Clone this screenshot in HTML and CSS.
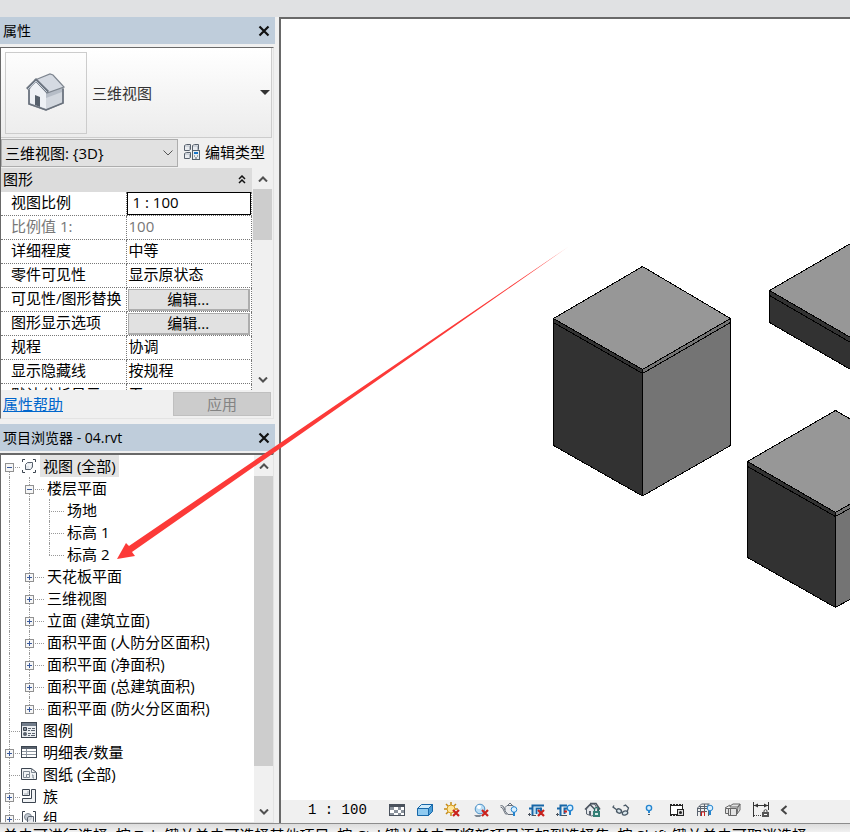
FILE: index.html
```html
<!DOCTYPE html>
<html lang="zh-CN">
<head>
<meta charset="utf-8">
<title>04.rvt</title>
<link rel="stylesheet" href="styles.css">
</head>
<body>
<div class="app">
  <div class="ribbon-edge"></div>
  <div class="workspace">
    <aside class="dock">
      <section class="palette">
        <header class="title-bar">
          <h2>属性</h2>
          <button class="close" aria-label="关闭属性"><svg width="12" height="12" viewBox="0 0 12 12"><path d="M1.500 1.500l9 9M10.500 1.500l-9 9" stroke="#111" stroke-width="2.200" fill="none"/></svg></button>
        </header>
        <div class="panel">
          <button class="type-selector">
            <span class="thumb">
              <svg width="40" height="40" viewBox="0 0 40 40">
                <path d="M3 16v15l17 6 17-7V15L22 10z" fill="#c3c9d1" stroke="#8b929b" stroke-width="1.500"/>
                <path d="M4 16l6-8 11 11v17L4 30z" fill="#eef1f5"/>
                <path d="M20 19l16-4v15l-16 6z" fill="#b6bdc7"/>
                <path d="M20 25l16-6v11l-16 6z" fill="#d3d8df"/>
                <path d="M9 7L24 1l3 1 11 12-17 6z" fill="#d5dae2" stroke="#7d858f" stroke-width="1.200"/>
                <path d="M1 16l9-9 12 12" fill="none" stroke="#6c7580" stroke-width="3"/>
                <path d="M2 16l8-8 11 11" fill="none" stroke="#c2cad5" stroke-width="1"/>
                <path d="M9 22l5 2v10l-5-2z" fill="#555f6b"/>
                <path d="M3 17v14l17 6 17-7V16" fill="none" stroke="#6a727d" stroke-width="1.500"/>
              </svg>
            </span>
            <span class="type-name">三维视图</span>
            <svg class="drop" width="10" height="5" viewBox="0 0 10 5"><path d="M0 0h10L5 5z" fill="#333"/></svg>
          </button>
          <div class="instance-row">
            <div class="select-wrap">
              <select aria-label="视图"><option>三维视图: {3D}</option></select>
              <svg width="10" height="6" viewBox="0 0 10 6"><path d="M.5.5L5 5 9.500.5" fill="none" stroke="#555"/></svg>
            </div>
            <button class="edit-type">
              <svg width="17" height="17" viewBox="0 0 17 17" fill="#e9ecf0" stroke="#57606c">
                <path d="M1.500 2.500l2-1h4v5l-1 1h-5zM9.500 2.500l2-1h4v5l-1 1h-5zM1.500 10.500l2-1h4v5l-1 1h-5z"/>
                <path d="M2 3h4.500V7M10 3h4.500V7M2 11h4.500v4" fill="none" stroke="#b5bcc5"/>
                <rect x="9.500" y="7.500" width="7" height="9"/><path d="M11 9h4v2h-4z" fill="#1874c7" stroke="none"/><path d="M11 13h1M14 13h1M12 15h2"/>
              </svg>
              <span>编辑类型</span>
            </button>
          </div>
          <div class="property-area">
            <table class="properties">
              <thead><tr><th colspan="2" scope="colgroup"><span class="group">图形 <svg width="8" height="9" viewBox="0 0 8 9"><path d="M1 4l3-3 3 3M1 8l3-3 3 3" fill="none" stroke="#111" stroke-width="1.500"/></svg></span></th></tr></thead>
              <tbody>
                <tr><th scope="row"><label for="scale">视图比例</label></th><td><input id="scale" value="1 : 100"></td></tr>
                <tr class="muted"><th scope="row">比例值 1:</th><td>100</td></tr>
                <tr><th scope="row">详细程度</th><td>中等</td></tr>
                <tr><th scope="row">零件可见性</th><td>显示原状态</td></tr>
                <tr><th scope="row">可见性/图形替换</th><td><button class="cell-button">编辑...</button></td></tr>
                <tr><th scope="row">图形显示选项</th><td><button class="cell-button">编辑...</button></td></tr>
                <tr><th scope="row">规程</th><td>协调</td></tr>
                <tr><th scope="row">显示隐藏线</th><td>按规程</td></tr>
                <tr><th scope="row">默认分析显示</th><td>无</td></tr>
              </tbody>
            </table>
            <div class="scrollbar short">
              <button aria-label="向上"><svg width="10" height="6" viewBox="0 0 10 6"><path d="M1 5.500l4-4 4 4" fill="none" stroke="#505050" stroke-width="2"/></svg></button>
              <span class="grip"></span>
              <button aria-label="向下"><svg width="10" height="6" viewBox="0 0 10 6"><path d="M1 .5l4 4 4-4" fill="none" stroke="#505050" stroke-width="2"/></svg></button>
            </div>
          </div>
          <footer class="panel-foot">
            <a href="#help">属性帮助</a>
            <button disabled>应用</button>
          </footer>
        </div>
      </section>

      <section class="palette browser">
        <header class="title-bar">
          <h2>项目浏览器 - 04.rvt</h2>
          <button class="close" aria-label="关闭项目浏览器"><svg width="12" height="12" viewBox="0 0 12 12"><path d="M1.500 1.500l9 9M10.500 1.500l-9 9" stroke="#111" stroke-width="2.200" fill="none"/></svg></button>
        </header>
        <div class="panel tree-panel">
          <ul class="tree">
            <li class="row root selected"><i class="cell node first"><b class="toggle minus"></b></i><svg width="16" height="16" viewBox="0 0 16 16" fill="none" stroke="#3c4550"><path d="M1.500 4V1.500H4M12 1.500h2.500V4M1.500 12v2.500H4M12 14.500h2.500V12"/><path d="M4.500 6.500l2-2h5v4.500l-2 2.500h-5z" fill="#e3e7ec" stroke="#59626e"/><path d="M5 7h4v4M9 7l2-2" stroke="#fff"/></svg><span>视图 (全部)</span></li>
            <li class="row"><i class="cell"></i><i class="cell node"><b class="toggle minus"></b></i><span>楼层平面</span></li>
            <li class="row"><i class="cell"></i><i class="cell"></i><i class="cell node leaf"></i><span>场地</span></li>
            <li class="row"><i class="cell"></i><i class="cell"></i><i class="cell node leaf"></i><span>标高 1</span></li>
            <li class="row"><i class="cell"></i><i class="cell"></i><i class="cell node leaf last"></i><span>标高 2</span></li>
            <li class="row"><i class="cell"></i><i class="cell node"><b class="toggle"></b></i><span>天花板平面</span></li>
            <li class="row"><i class="cell"></i><i class="cell node"><b class="toggle"></b></i><span>三维视图</span></li>
            <li class="row"><i class="cell"></i><i class="cell node"><b class="toggle"></b></i><span>立面 (建筑立面)</span></li>
            <li class="row"><i class="cell"></i><i class="cell node"><b class="toggle"></b></i><span>面积平面 (人防分区面积)</span></li>
            <li class="row"><i class="cell"></i><i class="cell node"><b class="toggle"></b></i><span>面积平面 (净面积)</span></li>
            <li class="row"><i class="cell"></i><i class="cell node"><b class="toggle"></b></i><span>面积平面 (总建筑面积)</span></li>
            <li class="row"><i class="cell"></i><i class="cell node last"><b class="toggle"></b></i><span>面积平面 (防火分区面积)</span></li>
            <li class="row root"><i class="cell node"></i><svg width="16" height="16" viewBox="0 0 16 16"><rect x=".5" y=".5" width="15" height="15" fill="#eceff2" stroke="#3c4550"/><path d="M1 1h14v3H1z" fill="#727d8b"/><path d="M2.500 5.500h3v3h-3z" fill="#8a94a0" stroke="#3c4550"/><circle cx="4" cy="12" r="2" fill="#59626e"/><path d="M7 6.500h3M11 6.500h3M7 8.500h2M10 8.500h4M7 11.500h3M11 11.500h3M7 13.500h2M10 13.500h4" stroke="#59626e"/></svg><span>图例</span></li>
            <li class="row root"><i class="cell node"><b class="toggle"></b></i><svg width="16" height="16" viewBox="0 0 16 16"><rect x=".5" y="2.500" width="15" height="11" fill="#fff" stroke="#3c4550"/><path d="M1 3h14v2H1z" fill="#59626e"/><path d="M1 7.500h14M1 10.500h14M5.500 5v8" stroke="#8d96a0"/></svg><span>明细表/数量</span></li>
            <li class="row root"><i class="cell node"></i><svg width="16" height="16" viewBox="0 0 16 16"><path d="M.5 2.500h10l5 4v7H.5z" fill="#f1f3f5" stroke="#3c4550"/><path d="M10.500 2.500v4h5M2.500 5.500h6v3h-3v3h-3zM8.500 8.500v3h-3M11 9h1v3h1" fill="none" stroke="#7d8792"/></svg><span>图纸 (全部)</span></li>
            <li class="row root"><i class="cell node"><b class="toggle"></b></i><svg width="16" height="16" viewBox="0 0 16 16" fill="#f1f3f5" stroke="#3c4550"><path d="M1.500 1.500h7v6h-7z"/><path d="M3 6h4V3" stroke="#a5adb7" fill="none"/><path d="M10.500 1.500h4v13h-13v-4h9z"/></svg><span>族</span></li>
            <li class="row root"><i class="cell node"><b class="toggle"></b></i><svg width="16" height="16" viewBox="0 0 16 16" fill="none" stroke="#3c4550"><path d="M4 1.500H1.500v13H4M12 1.500h2.500v13H12"/><circle cx="7" cy="7" r="3.500" fill="#c4cbd3" stroke="#7d8792"/><path d="M7.500 6.500h5v5l-2 2h-4V8z" fill="#dfe3e8" fill-opacity=".7" stroke="#59626e"/></svg><span>组</span></li>
          </ul>
          <div class="scrollbar long">
            <button aria-label="向上"><svg width="10" height="6" viewBox="0 0 10 6"><path d="M1 5.500l4-4 4 4" fill="none" stroke="#505050" stroke-width="2"/></svg></button>
            <span class="grip"></span>
            <button aria-label="向下"><svg width="10" height="6" viewBox="0 0 10 6"><path d="M1 .5l4 4 4-4" fill="none" stroke="#505050" stroke-width="2"/></svg></button>
          </div>
        </div>
      </section>
    </aside>

    <main class="view">
      <svg class="model" width="100%" height="100%" stroke="#000" stroke-linejoin="round" shape-rendering="crispEdges">
        <g transform="translate(-281 -19)">
          <g>
            <path d="M553.500 318.500L642.500 369.500V496L553.500 445.500z" fill="#323232"/>
            <path d="M730.500 318.500L642.500 369.500V496L730.500 445.500z" fill="#747474"/>
            <path d="M642.500 266.500L730.500 318.500 642.500 369.500 553.500 318.500z" fill="#979797"/>
            <path d="M553.500 322.500L642.500 373.500 730.500 322.500" fill="none"/>
          </g>
          <g>
            <path d="M769.500 290.500L945.500 392.500V424.500L769.500 322.500z" fill="#323232"/>
            <path d="M769.500 290.500L945.500 188.500 1121.500 290.500 945.500 392.500z" fill="#979797"/>
            <path d="M769.500 295.500L945.500 397.500" fill="none"/>
          </g>
          <g>
            <path d="M747.500 461.500L835.500 512.500V607.500L747.500 557.500z" fill="#323232"/>
            <path d="M923.500 461.500L835.500 512.500V607.500L923.500 557.500z" fill="#747474"/>
            <path d="M835.500 410.500L923.500 461.500 835.500 512.500 747.500 461.500z" fill="#979797"/>
            <path d="M747.500 466.500L835.500 516.500 923.500 466.500" fill="none"/>
          </g>
        </g>
      </svg>
      <nav class="view-bar" aria-label="视图控制栏">
        <button class="scale-button">1 : 100</button>
        <div class="tools">
          <button aria-label="详细程度"><svg width="18" height="16" viewBox="0 0 18 16"><rect x="1.500" y="2.500" width="15" height="11" fill="#fff" stroke="#4a525d"/><path d="M2 3h14v2H2z" fill="#4a525d"/><path d="M2 5h4v3H2zM10 5h3v3h-3zM6 8h4v3H6zM13 8h3v3h-3zM2 11h4v2H2zM10 11h3v2h-3z" fill="#8a929c"/></svg></button>
          <button aria-label="视觉样式"><svg width="18" height="16" viewBox="0 0 18 16" stroke="#1767a8" stroke-linejoin="round"><path d="M1.500 6.500l4-4h11l-4 4z" fill="#cfeafb"/><path d="M1.500 6.500h11v7h-11z" fill="#8fcaf0"/><path d="M12.500 6.500l4-4v7l-4 4z" fill="#4b9ed8"/></svg></button>
          <button aria-label="日光路径"><svg width="18" height="16" viewBox="0 0 18 16"><path d="M7 0v3M7 11v3M0 7h3M2 2l2 2M12 2l-2 2M2 12l2-2M11 7h3" stroke="#c28a17" stroke-width="1.500"/><circle cx="7" cy="7" r="4" fill="#ffe69a" stroke="#d59b20"/><path d="M9 8l6 6M15 8l-6 6" stroke="#c9211c" stroke-width="2.200"/></svg></button>
          <button aria-label="阴影"><svg width="18" height="16" viewBox="0 0 18 16"><path d="M2 13h8l-2 2H4z" fill="#7d8792"/><circle cx="8" cy="7" r="4.800" fill="#b9ddf5" stroke="#4f91c5"/><circle cx="7" cy="5" r="2" fill="#fff"/><path d="M10 8l6 6M16 8l-6 6" stroke="#c9211c" stroke-width="2.200"/></svg></button>
          <button aria-label="渲染"><svg width="18" height="16" viewBox="0 0 18 16" fill="#e9ebee" stroke="#68717c"><path d="M5 5.500l2-2h6l2 3-1 6H8L5 9z"/><path d="M8 3l2-2 2 2M5 8L3 4 .5 3.500M.5 5l2 1 3 6h2" fill="none"/><circle cx="14" cy="7.500" r="2.800" fill="#d8efff" stroke="#2585cf"/><path d="M14 10v4" stroke="#2585cf" stroke-width="2"/></svg></button>
          <button aria-label="裁剪视图"><svg width="18" height="16" viewBox="0 0 18 16"><path d="M4.500 14V3.500H16M1 6.500h3M8 6.500h5V13" fill="none" stroke="#1767a8" stroke-width="2"/><path d="M6 5h6v7H6z" fill="#b9ddf5"/><path d="M8.500 12V6.500H13" fill="none" stroke="#1767a8" stroke-width="1.500"/><path d="M0 12.500h3M4 13.500h4M1.500 11v3" stroke="#4a525d"/><path d="M10 8l6 6M16 8l-6 6" stroke="#c9211c" stroke-width="2.200"/></svg></button>
          <button aria-label="显示裁剪区域"><svg width="18" height="16" viewBox="0 0 18 16"><path d="M4.500 14V3.500H11M1 6.500h3M8.500 12V6.500H11" fill="none" stroke="#1767a8" stroke-width="2"/><path d="M0 12.500h3M5 13.500h6M1.500 11v3" stroke="#4a525d"/><path d="M8 9.500h3" stroke="#c9211c" stroke-width="2"/><circle cx="14" cy="6" r="2.800" fill="#d8efff" stroke="#2585cf" stroke-width="1.300"/><path d="M14 9v4" stroke="#2585cf" stroke-width="2"/></svg></button>
          <button aria-label="锁定三维视图"><svg width="18" height="16" viewBox="0 0 18 16"><path d="M2.500 7v5l5 2 6-2V7l-3-5H7z" fill="#e4e7eb" stroke="#59626e"/><path d="M5 9h2v4H5z" fill="#59626e"/><path d="M1 7.500l5-5 5 5M6 1.500h6l4 6" fill="none" stroke="#4a525d" stroke-width="1.500"/><path d="M10.500 9V7.500a2 2 0 014 0V9" fill="none" stroke="#236b63" stroke-width="1.200"/><path d="M9 9h7v6H9z" fill="#347f76"/><path d="M11 11h3v2h-3z" fill="#d6ebe8"/></svg></button>
          <button aria-label="临时隐藏隔离"><svg width="18" height="16" viewBox="0 0 18 16" fill="#d9e6ec" stroke="#4a5966" stroke-width="1.300"><ellipse cx="7" cy="9" rx="2.500" ry="2" transform="rotate(25 7 9)"/><ellipse cx="13" cy="11" rx="2.800" ry="2" transform="rotate(-20 13 11)"/><path d="M5 8L1 5l1-1.500M15 10l1.500-4-3-3-2 1M9 10l2 1" fill="none"/></svg></button>
          <button aria-label="显示隐藏的图元"><svg width="18" height="16" viewBox="0 0 18 16"><circle cx="9" cy="6" r="2.600" fill="#d8efff" stroke="#2585cf" stroke-width="1.400"/><path d="M9 9v2" stroke="#2585cf" stroke-width="2"/><path d="M8 12.500h2" stroke="#4a525d"/></svg></button>
          <button aria-label="临时视图属性"><svg width="18" height="16" viewBox="0 0 18 16"><path d="M2.500 3.500h12v9h-12z" fill="#fff" stroke="#222"/><path d="M2 3h13" stroke="#222" stroke-width="2" stroke-dasharray="2 1"/><path d="M2 13h13" stroke="#222" stroke-width="2" stroke-dasharray="2 1"/><rect x="9.500" y="7.500" width="6" height="6" fill="#ddd" stroke="#222"/><circle cx="12.500" cy="10.500" r="1.500" fill="#222"/></svg></button>
          <button aria-label="分析模型"><svg width="18" height="16" viewBox="0 0 18 16" fill="none" stroke="#59626e"><path d="M1.500 14V6l4-4h8M1.500 6.500h11V14M4.500 14V4M8.500 14V2M1 9.500h10M12 2v4M3 4.500h9"/><path d="M5.500 14v-4h3v4" stroke="#c9211c"/><circle cx="14" cy="6" r="2.800" fill="#d8efff" stroke="#2585cf"/><path d="M14 9v4" stroke="#2585cf" stroke-width="2"/></svg></button>
          <button aria-label="位移集"><svg width="18" height="16" viewBox="0 0 18 16" fill="#e2e2e2" stroke="#666"><path d="M6 4l3-2h7l-2 3H6zM14 5l2-3v6l-3 4z"/><path d="M4.500 6.500h8v7h-8zM1.500 6.500h3v5h-3zM6.500 6v8M1 6l5-3"/></svg></button>
          <button aria-label="约束"><svg width="18" height="16" viewBox="0 0 18 16"><path d="M1.500 0v15M16.500 0v8M2 3.500h14" stroke="#333"/><path d="M2 3.500l4-2v4zM16 3.500l-4-2v4z" fill="#333"/><path d="M2 13.500h8" stroke="#444" stroke-dasharray="1 1"/><path d="M12 10V8.500a2 2 0 013 0V10" fill="none" stroke="#444"/><path d="M10 10h7v5h-7z" fill="#555"/><path d="M12 12h3v1h-3z" fill="#fff"/></svg></button>
        </div>
        <button class="collapse" aria-label="收起"><svg width="8" height="10" viewBox="0 0 8 10"><path d="M6.500 1L2 5l4.500 4" fill="none" stroke="#444" stroke-width="2"/></svg></button>
      </nav>
    </main>
  </div>
  <footer class="status">单击可进行选择; 按 Tab 键并单击可选择其他项目; 按 Ctrl 键并单击可将新项目添加到选择集; 按 Shift 键并单击可取消选择。</footer>
  <svg class="callout" width="100%" height="100%" aria-hidden="true">
    <path d="M117 559L126 543 129 546 568 247 132 552 135 556z" fill="#fc3a38"/>
  </svg>
</div>
</body>
</html>
```
FILE: styles.css
```css
* { box-sizing: border-box; }
body {
  margin: 0;
  background: #f0f0f0;
  color: #000;
  font: 15px/22px "Open Sans", "Noto Sans CJK SC", sans-serif;
}
button, input, select { font: inherit; color: inherit; margin: 0; padding: 0; border: 0; background: none; border-radius: 0; }
svg { display: block; flex: none; }

.app { position: relative; height: 100vh; display: flex; flex-direction: column; overflow: hidden; }
.ribbon-edge { height: 17px; flex: none; background: #e0e1e3; }
.workspace { flex: 1; min-height: 0; display: flex; gap: 4px; }

.dock { width: 275px; flex: none; display: flex; flex-direction: column; gap: 5px; }
.title-bar { height: 27px; flex: none; display: flex; align-items: center; justify-content: space-between; padding: 0 5px 0 3px; background: #bfcddb; }
.title-bar h2 { margin: 0; font-size: 14px; font-weight: 400; }
.panel { margin: 3px 1px 0 0; border: 1px solid; border-color: #696969 #e3e3e3 #e3e3e3 #696969; padding-right: 1px; }

.type-selector { width: 100%; height: 90px; display: flex; align-items: center; gap: 5px; padding: 0 1px 0 4px; background: linear-gradient(#fff, #ececec); border: solid #ccc; border-width: 0 1px 1px 0; color: #333; text-align: left; }
.thumb { width: 82px; height: 82px; display: grid; place-items: center; border: 1px solid #ccc; background: linear-gradient(#fdfdfd, #ededed); }
.type-name { flex: 1; }

.instance-row { display: flex; align-items: flex-start; gap: 5px; padding: 1px 0; }
.select-wrap { position: relative; width: 177px; }
.select-wrap select { display: block; width: 100%; height: 28px; padding-left: 3px; appearance: none; background: #e1e1e1; border: 1px solid #adadad; }
.select-wrap svg { position: absolute; right: 5px; top: 11px; pointer-events: none; }
.edit-type { display: flex; align-items: center; gap: 5px; height: 25px; }

.property-area { display: flex; height: 222px; overflow: hidden; }
.properties { flex: 1; align-self: flex-start; border-collapse: separate; border-spacing: 0; table-layout: fixed; background: #fff; margin-right: 1px; }
.properties th, .properties td { height: 24px; padding: 0 0 3px 2px; text-align: left; font-weight: 400; white-space: nowrap; line-height: 20px; border: dotted #777; border-width: 0 1px 1px 0; }
.properties th { width: 50%; padding-left: 10px; }
.properties thead th { padding: 0 6px 2px 2px; background: #dcdcdc; border: 0; }
.group { display: flex; align-items: center; justify-content: space-between; }
.muted { color: #777; }
.properties input { display: block; width: 100%; height: 23px; padding: 0 5px 3px; border: 1px solid #000; background: #fff; }
.properties td:has(input) { padding: 0; }
.properties td:has(button) { padding: 0 1px; }
.cell-button { display: block; width: 100%; height: 22px; background: #e1e1e1; border: 1px solid #adadad; border-width: 1px 2px 2px 1px; line-height: 18px; }

.scrollbar { width: 19px; flex: none; display: flex; flex-direction: column; background: #f0f0f0; }
.scrollbar button { height: 21px; flex: none; display: grid; place-items: center; }
.scrollbar button:last-child { margin-top: auto; }
.grip { background: #cdcdcd; }
.short .grip { height: 51px; }
.long .grip { flex: 0 0 79%; }

.panel-foot { display: flex; align-items: center; justify-content: space-between; padding: 2px 1px 2px 2px; }
.panel-foot a { color: #0066cc; }
.panel-foot button { width: 98px; height: 24px; background: #ccc; border: 1px solid #bfbfbf; color: #838383; }

.browser { flex: 1; min-height: 0; display: flex; flex-direction: column; }
.tree-panel { flex: 1; min-height: 0; display: flex; margin-top: 2px; padding: 0; background: #fff; border-top-width: 2px; }
.tree { flex: 1; margin: 0; padding: 0; list-style: none; overflow: hidden; }
.row { display: flex; align-items: center; height: 22px; white-space: nowrap; }
.row span { margin-left: 6px; }
.root span { margin-left: 3px; padding: 0 3px; }
.selected span { background: #e3e3e3; }
.cell { position: relative; width: 20px; height: 22px; flex: none; }
.cell::before { content: ""; position: absolute; left: 8px; top: 0; bottom: 0; border-left: 1px dotted #999; }
.cell.first::before { top: 12px; }
.cell.last::before { bottom: 10px; }
.node::after { content: ""; position: absolute; left: 8px; top: 12px; width: 15px; border-top: 1px dotted #999; }
.root .node::after { width: 11px; }
.toggle { position: absolute; z-index: 1; left: 4px; top: 8px; width: 9px; height: 9px; border: 1px solid #919191; background: linear-gradient(#3a5a9c, #3a5a9c) center / 5px 1px no-repeat, linear-gradient(#3a5a9c, #3a5a9c) center / 1px 5px no-repeat, #f6f6f6; }
.toggle.minus { background: linear-gradient(#3a5a9c, #3a5a9c) center / 5px 1px no-repeat, #f6f6f6; }

.view { flex: 1; min-width: 0; display: flex; flex-direction: column; border: solid #696969; border-width: 2px 0 0 2px; background: #fff; }
.model { flex: 1; min-height: 0; }
.view-bar { height: 23px; flex: none; display: flex; align-items: center; padding: 0 0 3px 27px; background: #f0f0f0; overflow: hidden; }
.scale-button { width: 80px; text-align: left; font: 14px/20px "Liberation Mono", monospace; }
.tools { display: flex; gap: 10px; }
.collapse { margin-left: 10px; }

.status { height: 9px; flex: none; overflow: hidden; padding-left: 3px; border-top: 1px solid #8c8c8c; background: linear-gradient(#dcdcdc, #f0f0f0); white-space: nowrap; line-height: 22px; }
.callout { position: absolute; inset: 0; pointer-events: none; }
```
